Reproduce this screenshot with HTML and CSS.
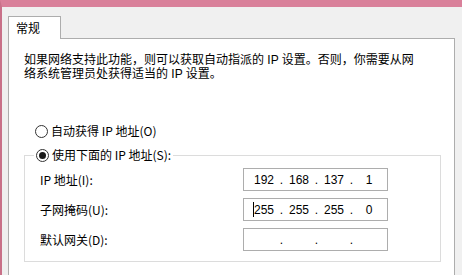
FILE: index.html
```html
<!DOCTYPE html>
<html>
<head>
    <meta charset="utf-8">
    <title>IP 设置</title>
    <link rel="stylesheet" href="styles.css">
</head>
<body>
    <div class="frame">
        <div class="tabs">
            <div class="tab">常规</div>
        </div>
        <div class="panel">
            <p class="intro">如果网络支持此功能，则可以获取自动指派的 IP 设置。否则，你需要从网<br>络系统管理员处获得适当的 IP 设置。</p>

            <div class="radio-row">
                <span class="radio"></span>
                <span>自动获得 IP 地址(O)</span>
            </div>

            <fieldset class="group">
                <legend class="radio-row">
                    <span class="radio checked"></span>
                    <span>使用下面的 IP 地址(S):</span>
                </legend>
                <div class="field">
                    <label>IP 地址(I):</label>
                    <div class="ipbox">
                        <span class="seg">192</span><span class="dot">.</span><span class="seg">168</span><span class="dot">.</span><span class="seg">137</span><span class="dot">.</span><span class="seg">1</span>
                    </div>
                </div>
                <div class="field">
                    <label>子网掩码(U):</label>
                    <div class="ipbox">
                        <span class="caret"></span><span class="seg">255</span><span class="dot">.</span><span class="seg">255</span><span class="dot">.</span><span class="seg">255</span><span class="dot">.</span><span class="seg">0</span>
                    </div>
                </div>
                <div class="field">
                    <label>默认网关(D):</label>
                    <div class="ipbox">
                        <span class="seg"></span><span class="dot">.</span><span class="seg"></span><span class="dot">.</span><span class="seg"></span><span class="dot">.</span><span class="seg"></span>
                    </div>
                </div>
            </fieldset>
        </div>
    </div>
</body>
</html>
```
FILE: styles.css
```css
html, body {
    margin: 0;
    height: 100%;
}

body {
    background-color: #f0f0f0;
    font-family: "Noto Sans CJK SC", "Liberation Sans", sans-serif;
    font-size: 12px;
    color: #000;
    overflow: hidden;
}

.frame {
    box-sizing: border-box;
    height: 100%;
    border-top: 7px solid #d9809a;
    border-left: 2px solid #c97189;
    padding: 9px 0 0 6px;
}

.tabs {
    display: flex;
}

.tab {
    position: relative;
    z-index: 1;
    width: 44px;
    height: 22px;
    line-height: 22px;
    padding-left: 7px;
    margin-bottom: -1px;
    background-color: #fff;
    border: 1px solid #adadad;
    border-bottom: none;
}

.panel {
    box-sizing: border-box;
    width: 447px;
    height: 237px;
    background-color: #fff;
    border: 1px solid #adadad;
    border-bottom: none;
    padding-top: 14px;
}

.intro {
    margin: 0 0 0 15px;
    font-family: "Liberation Sans", "Noto Sans CJK SC", sans-serif;
    line-height: 14px;
}

.radio-row {
    display: flex;
    align-items: center;
    gap: 3px;
    height: 16px;
    line-height: 16px;
}

.panel > .radio-row {
    margin: 42px 0 0 26px;
}

.radio {
    box-sizing: border-box;
    width: 13px;
    height: 13px;
    border: 1px solid #333;
    border-radius: 50%;
    background-color: #fff;
    display: flex;
    align-items: center;
    justify-content: center;
}

.radio.checked::after {
    content: "";
    width: 7px;
    height: 7px;
    border-radius: 50%;
    background-color: #1a1a1a;
}

.group {
    margin: 8px 13px 0 15px;
    padding: 5px 0 10px 15px;
    border: 1px solid #dcdcdc;
    min-width: 0;
}

.group legend {
    padding: 0 2px;
    margin-left: -6px;
}

.field {
    display: grid;
    grid-template-columns: 203px 145px;
    align-items: center;
    height: 23px;
    margin-bottom: 7px;
}

.field:last-child {
    margin-bottom: 0;
}

.ipbox {
    box-sizing: border-box;
    height: 23px;
    border: 1px solid #adadad;
    display: flex;
    align-items: center;
    padding-left: 6px;
    font-family: "Liberation Sans", sans-serif;
    font-size: 12px;
}

.seg {
    width: 28px;
    text-align: center;
}

.dot {
    width: 7px;
    text-align: center;
}

.caret {
    width: 1px;
    height: 15px;
    margin-left: 3px;
    margin-right: -4px;
    background-color: #000;
}
```
